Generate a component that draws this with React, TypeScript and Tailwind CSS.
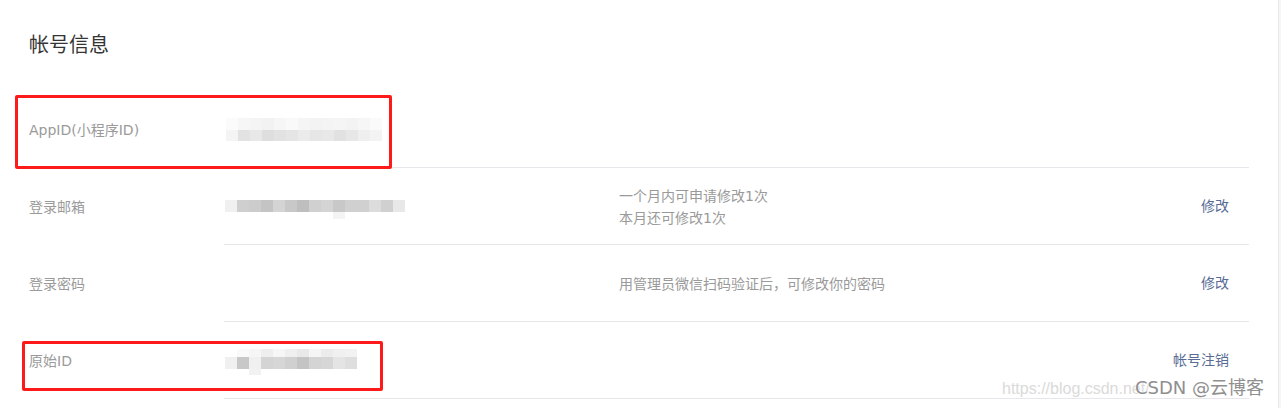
import React from "react";

const FONT = "font-['DejaVu_Sans','Noto_Sans_CJK_SC',sans-serif]";

type Block = { x: number; y: number; w?: number; h?: number; c: string };

function Mosaic({ width, height, blocks }: { width: number; height: number; blocks: Block[] }) {
  return (
    <svg width={width} height={height} viewBox={`0 0 ${width} ${height}`} className="block">
      {blocks.map((b, i) => (
        <rect key={i} x={b.x} y={b.y} width={b.w ?? 12} height={b.h ?? 12} fill={b.c} />
      ))}
    </svg>
  );
}

const rowOf = (y: number, colors: string[], h = 12, startCol = 0): Block[] =>
  colors.map((c, i) => ({ x: (i + startCol) * 12, y, h, c }));

// AppID blur (two rows)
const appIdBlocks: Block[] = [
  ...rowOf(0, ["#fbfbfb", "#f6f6f6", "#f4f4f4", "#f2f2f2", "#f6f6f6", "#f9f9f9", "#f5f5f5", "#f3f3f3", "#f4f4f4", "#f5f5f5", "#f3f3f3", "#f6f6f6", "#fafafa"], 12),
  ...rowOf(12, ["#f4f4f4", "#e2e2e2", "#e8e8e8", "#dedede", "#e2e2e2", "#e5e5e5", "#ebebeb", "#e6e6e6", "#e8e8e8", "#e1e1e1", "#e7e7e7", "#efefef", "#f3f3f3"], 11),
];

// email blur
const emailBlocks: Block[] = [
  ...rowOf(0, ["#f0f0f0", "#cfcfcf", "#cccccc", "#c4c4c4", "#d4d4d4", "#c8c8c8", "#bebebe", "#d0d0d0", "#d4d4d4", "#c8c8c8", "#d0d0d0", "#d0d0d0", "#dcdcdc", "#d0d0d0", "#e8e8e8"]),
  { x: 108, y: 12, h: 7, c: "#f4f4f4" },
];

// original id blur
const origBlocks: Block[] = [
  ...rowOf(0, ["#fafafa", "#f6f6f6", "#eeeeee", "#f6f6f6", "#efefef", "#e9e9e9", "#f5f5f5", "#ececec", "#f0f0f0", "#f2f2f2"], 8, 1),
  ...rowOf(8, ["#f0f0f0", "#c8c8c8", "#f0f0f0", "#d4d4d4", "#d6d6d6", "#d0d0d0", "#c4c4c4", "#d4d4d4", "#d6d6d6", "#e4e4e4", "#dedede"]),
  { x: 24, y: 20, h: 6, c: "#f2f2f2" },
];

interface RowProps {
  label: string;
  value?: React.ReactNode;
  desc?: React.ReactNode;
  action?: string;
}

function InfoRow({ label, value, desc, action }: RowProps) {
  return (
    <div className="flex h-[77px]">
      <div className="w-[195px] flex items-center pt-[1px] text-[14px] text-[#9a9a9a]">{label}</div>
      <div className="flex-1 flex items-center border-b border-[#e7e7eb]">
        <div className="w-[395px] flex items-center">{value}</div>
        <div className="flex-1 pt-[1px] text-[14px] leading-[22px] text-[#9a9a9a]">{desc}</div>
        {action && <div className="pr-[20px] pt-[1px] text-[14px] text-[#576b95]">{action}</div>}
      </div>
    </div>
  );
}

export default function App() {
  return (
    <div className={`${FONT} relative w-[1281px] h-[408px] overflow-hidden bg-[#f6f6f6]`}>
      <div className="w-[1279px] h-full bg-white border-r border-[#e7e7eb] pl-[29px] pr-[29px]">
        <div className="h-[91px] pt-[31px]">
          <h2 className="text-[20px] leading-[28px] text-[#353535] font-normal">帐号信息</h2>
        </div>
        <InfoRow
          label="AppID(小程序ID)"
          value={<div className="pl-[2px] pt-[1px]"><Mosaic width={156} height={23} blocks={appIdBlocks} /></div>}
        />
        <InfoRow
          label="登录邮箱"
          value={<div className="pl-[1px] pt-[7px]"><Mosaic width={180} height={19} blocks={emailBlocks} /></div>}
          desc={
            <>
              <div>一个月内可申请修改1次</div>
              <div>本月还可修改1次</div>
            </>
          }
          action="修改"
        />
        <InfoRow label="登录密码" desc="用管理员微信扫码验证后，可修改你的密码" action="修改" />
        <InfoRow
          label="原始ID"
          value={<div className="pl-[1px] pt-[4px]"><Mosaic width={132} height={26} blocks={origBlocks} /></div>}
          action="帐号注销"
        />
      </div>

      {/* annotation boxes */}
      <div className="absolute left-[15px] top-[95px] w-[377px] h-[74px] border-[3px] border-[#ff1a1a] rounded-[2px]" />
      <div className="absolute left-[22px] top-[341px] w-[361px] h-[50px] border-[3px] border-[#ff1a1a] rounded-[2px]" />

      {/* watermark */}
      <div className="absolute left-[1002px] top-[379px] text-[16px] leading-[20px] text-[#dadada] font-['Liberation_Sans',sans-serif] whitespace-nowrap">
        https://blog.csdn.net/
      </div>
      <div className="absolute left-[1135px] top-[376px] text-[18px] leading-[24px] text-[#8f8f8f] whitespace-nowrap [text-shadow:0_0_2px_#fff,0_0_2px_#fff]">
        CSDN @云博客
      </div>
    </div>
  );
}
